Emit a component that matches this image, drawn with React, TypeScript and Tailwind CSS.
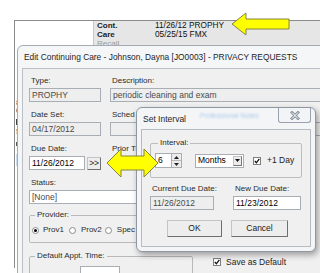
import React from "react";

function Label({ children, className = "" }: { children: React.ReactNode; className?: string }) {
  return (
    <div className={`h-[12px] leading-[12px] text-[8px] text-[#2b2b2b] pl-[2px] whitespace-nowrap ${className}`}>
      {children}
    </div>
  );
}

function TextBox({
  value,
  className = "",
  white = false,
}: {
  value?: string;
  className?: string;
  white?: boolean;
}) {
  return (
    <div
      className={`h-[14px] border border-[#a9adb4] flex items-center px-[2px] text-[8.5px] leading-none whitespace-nowrap overflow-hidden ${
        white ? "bg-white text-black" : "bg-[#eeeeee] text-[#4a4a4a]"
      } ${className}`}
    >
      {value}
    </div>
  );
}

function Radio({ on = false }: { on?: boolean }) {
  return (
    <span className="w-[7px] h-[7px] rounded-full border border-[#8a8a8a] bg-white flex items-center justify-center shrink-0">
      {on && <span className="w-[3px] h-[3px] rounded-full bg-black" />}
    </span>
  );
}

function Check() {
  return (
    <span className="w-[8px] h-[8px] border border-[#7f7f7f] bg-white flex items-center justify-center shrink-0">
      <svg width="6" height="6" viewBox="0 0 6 6">
        <path d="M0.8 3 L2.4 4.8 L5.3 0.9" stroke="#111" strokeWidth="1.3" fill="none" />
      </svg>
    </span>
  );
}

function Button({ children, className = "" }: { children: React.ReactNode; className?: string }) {
  return (
    <div
      className={`flex items-center justify-center bg-[#ededed] border border-[#c4c4c4] border-r-[#6f6f6f] border-b-[#6f6f6f] rounded-[1px] text-[8.5px] text-[#222] ${className}`}
    >
      {children}
    </div>
  );
}

export default function App() {
  return (
    <div className="relative w-[320px] h-[273px] overflow-hidden bg-white font-['Liberation_Sans',Arial,sans-serif] text-black">
      {/* background list window */}
      <div className="absolute left-[14px] top-[20px] w-[320px] h-[248px] border-l border-t border-[#8c8c8c] bg-white">
        <div className="flex h-[30px]">
          <div className="w-[78px] flex flex-col" />
          <div className="flex-1 bg-[#e6e6e6] border-l border-[#c6c6c6] flex pl-[3px]">
            <div className="w-[58px] font-bold text-[8px] leading-[9px] text-[#222]">
              Cont.
              <br />
              Care
              <br />
              <span className="font-normal text-[#9a9a9a]">Recall</span>
            </div>
            <div className="text-[8.3px] leading-[9px] text-[#111]">
              11/26/12 PROPHY
              <br />
              05/25/15 FMX
            </div>
          </div>
        </div>
        <div className="flex flex-col text-[8px] leading-[8px] text-[#333] pl-[1px] mt-[48px]">
          <span>8</span>
          <span>0</span>
          <span className="mt-[4px] w-[3px] h-[6px] bg-[#444]" />
          <span className="mt-[3px]">5</span>
          <span className="mt-[6px] w-[3px] h-[4px] bg-[#555]" />
          <span className="mt-[8px] w-[3px] h-[12px] bg-[#c9dcef]" />
        </div>
      </div>

      {/* main window */}
      <div className="absolute left-[17px] top-[45px] w-[330px] h-[240px] rounded-t-[6px] border border-[#a3abb5] bg-[#f5f6f8] flex flex-col">
        <div className="h-[22px] shrink-0 flex items-center pl-[6px] text-[8.4px] text-[#1e1e1e] whitespace-nowrap">
          Edit Continuing Care - Johnson, Dayna [JO0003] - PRIVACY REQUESTS
        </div>
        <div className="flex-1 ml-[4px] border border-[#bcc1c7] bg-[#f0f0f0] flex flex-col pl-[6px] pt-[6px]">
          <div className="flex gap-[9px]">
            <div className="w-[72px]">
              <Label>Type:</Label>
              <TextBox value="PROPHY" className="mt-[1px]" />
            </div>
            <div className="w-[230px]">
              <Label>Description:</Label>
              <TextBox value="periodic cleaning and exam" className="mt-[1px]" />
            </div>
          </div>

          <div className="flex gap-[9px] mt-[7px]">
            <div className="w-[72px]">
              <Label>Date Set:</Label>
              <TextBox value="04/17/2012" className="mt-[1px]" />
            </div>
            <div className="w-[230px]">
              <Label>Sched</Label>
              <TextBox className="mt-[1px]" />
            </div>
          </div>

          <div className="flex gap-[9px] mt-[7px]">
            <div className="w-[72px]">
              <Label>Due Date:</Label>
              <div className="flex mt-[1px] items-center">
                <TextBox white value="11/26/2012" className="w-[57px]" />
                <Button className="ml-[2px] w-[14px] h-[13px] text-[7.5px]">&gt;&gt;</Button>
              </div>
            </div>
            <div className="w-[230px]">
              <Label>Prior Tr</Label>
            </div>
          </div>

          <div className="mt-[7px]">
            <Label>Status:</Label>
            <TextBox value="[None]" className="mt-[1px] w-[200px] bg-white" />
          </div>

          <fieldset className="mt-[5px] w-[160px] border border-[#b9b9b9] rounded-[2px] pl-[2px] pb-[6px]">
            <legend className="ml-[3px] px-[2px] text-[8px] leading-[12px] text-[#2b2b2b]">Provider:</legend>
            <div className="flex items-center h-[12px] mt-[3px] text-[8px] text-[#2b2b2b]">
              <Radio on />
              <span className="ml-[4px]">Prov1</span>
              <span className="ml-[5px]">
                <Radio />
              </span>
              <span className="ml-[5px]">Prov2</span>
              <span className="ml-[3px]">
                <Radio />
              </span>
              <span className="ml-[5px]">Spec</span>
            </div>
          </fieldset>

          <div className="flex items-start mt-[7px]">
            <fieldset className="w-[164px] h-[40px] border border-[#b9b9b9] rounded-[2px]">
              <legend className="ml-[5px] px-[2px] text-[8px] leading-[12px] text-[#2b2b2b]">
                Default Appt. Time:
              </legend>
              <div className="ml-[50px] mt-[4px] w-[40px] h-[14px] border border-[#a9adb4] bg-white" />
            </fieldset>
            <div className="ml-[20px] mt-[6px] flex items-center text-[8.5px] text-[#222]">
              <Check />
              <span className="ml-[5px]">Save as Default</span>
            </div>
          </div>
        </div>
      </div>

      {/* Set Interval dialog */}
      <div className="absolute left-[136px] top-[107px] w-[180px] h-[145px] rounded-[6px] border border-[#8e97a2] bg-[#f4f5f7] shadow-[2px_3px_6px_rgba(0,0,0,0.35)] flex flex-col">
        <div className="h-[21px] shrink-0 flex items-start pl-[6px] pr-[4px]">
          <span className="mt-[5px] text-[8.5px] text-[#1e1e1e] whitespace-nowrap">Set Interval</span>
          <span className="mt-[3px] ml-[14px] text-[7px] text-[#a9c9ea] blur-[1.2px] whitespace-nowrap">
            Professional Notes
          </span>
          <div className="ml-auto w-[33px] h-[15px] border border-t-0 border-[#98a1ad] rounded-b-[3px] bg-[#f2f4f6] flex items-center justify-center">
            <svg width="10" height="9" viewBox="0 0 10 9">
              <path d="M2 1.5 L8 7.5 M8 1.5 L2 7.5" stroke="#8a939f" strokeWidth="2.8" strokeLinecap="square" />
              <path d="M2 1.5 L8 7.5 M8 1.5 L2 7.5" stroke="#ffffff" strokeWidth="1" />
            </svg>
          </div>
        </div>
        <div className="flex-1 mx-[4px] mb-[4px] border border-[#b6bbc1] bg-[#f0f0f0] flex flex-col px-[8px] pt-[7px]">
          <fieldset className="border border-[#bdbdbd] rounded-[2px] pl-[4px] pb-[9px]">
            <legend className="ml-[3px] px-[2px] text-[8px] leading-[12px] text-[#2b2b2b]">Interval:</legend>
            <div className="flex items-center mt-[4px]">
              <TextBox white value="6" className="w-[17px] h-[15px]" />
              <div className="w-[10px] h-[15px] flex flex-col border border-[#a9adb4] border-l-0 bg-[#ececec]">
                <div className="flex-1 flex items-center justify-center border-b border-[#b9b9b9]">
                  <svg width="5" height="3" viewBox="0 0 5 3">
                    <path d="M0 3 L2.5 0 L5 3 Z" fill="#222" />
                  </svg>
                </div>
                <div className="flex-1 flex items-center justify-center">
                  <svg width="5" height="3" viewBox="0 0 5 3">
                    <path d="M0 0 L2.5 3 L5 0 Z" fill="#222" />
                  </svg>
                </div>
              </div>
              <div className="ml-[13px] w-[49px] h-[14px] border border-[#a9adb4] bg-white flex items-center justify-between pl-[2px] pr-[1px] text-[8.5px]">
                <span>Months</span>
                <span className="w-[9px] h-[10px] bg-[#ececec] border border-[#c2c2c2] border-r-[#777] border-b-[#777] flex items-center justify-center">
                  <svg width="5" height="3" viewBox="0 0 5 3">
                    <path d="M0 0 L2.5 3 L5 0 Z" fill="#111" />
                  </svg>
                </span>
              </div>
              <span className="ml-[9px]">
                <Check />
              </span>
              <span className="ml-[6px] text-[8.5px] text-[#222]">+1 Day</span>
            </div>
          </fieldset>

          <div className="flex mt-[5px] gap-[19px]">
            <div className="w-[64px]">
              <Label>Current Due Date:</Label>
              <TextBox value="11/26/2012" className="mt-[1px]" />
            </div>
            <div className="w-[68px]">
              <Label>New Due Date:</Label>
              <TextBox white value="11/23/2012" className="mt-[1px]" />
            </div>
          </div>

          <div className="flex mt-[10px]">
            <Button className="ml-[17px] w-[55px] h-[17px]">OK</Button>
            <Button className="ml-[9px] w-[57px] h-[17px]">Cancel</Button>
          </div>
        </div>
      </div>

      {/* yellow callout arrows */}
      <svg className="absolute inset-0 pointer-events-none" width="320" height="273" viewBox="0 0 320 273">
        <polygon
          points="232,24 246,13 246,19 289,19 289,29 246,29 246,35"
          fill="#ffff00"
          stroke="#85853a"
          strokeWidth="1"
        />
        <polygon
          points="107,163 121,149 121,156 144,156 144,149 158,163 144,177 144,170 121,170 121,177"
          fill="#ffff00"
          stroke="#85853a"
          strokeWidth="1"
        />
      </svg>
    </div>
  );
}
